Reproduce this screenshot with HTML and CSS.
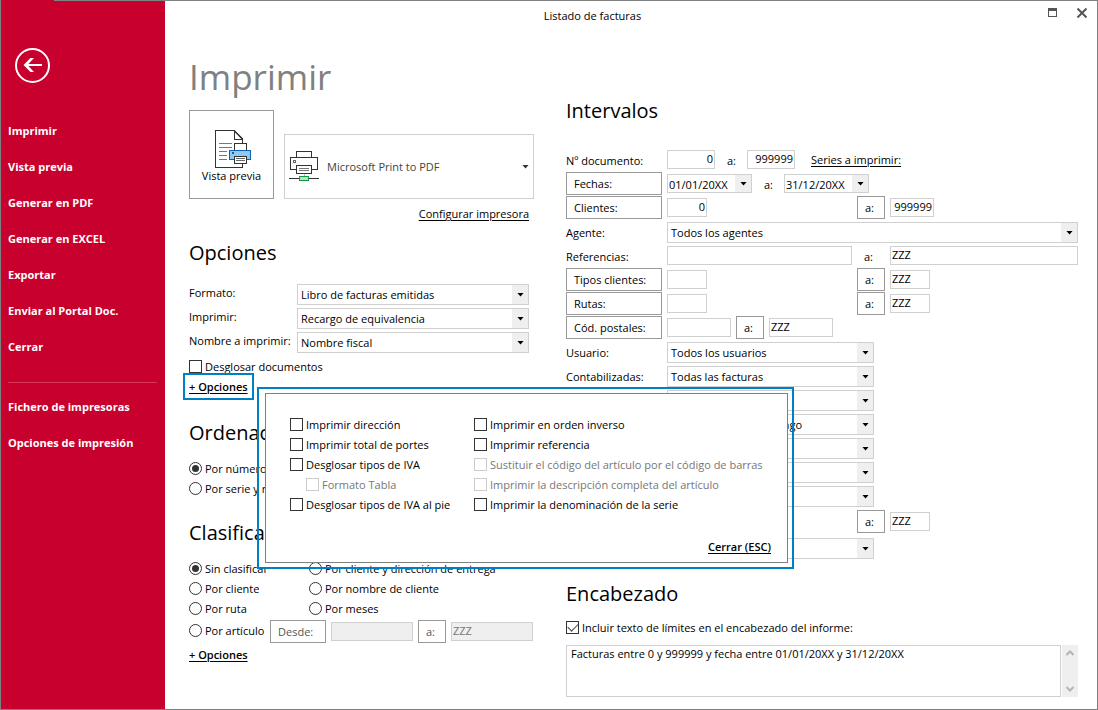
FILE: index.html
```html
<!DOCTYPE html>
<html lang="es">
<head>
<meta charset="utf-8">
<title>Listado de facturas</title>
<link rel="stylesheet" href="styles.css">
</head>
<body>
<div class="window">
  <nav class="sidebar">
    <button class="back" aria-label="Volver">
      <svg width="36" height="36" viewBox="0 0 36 36" fill="none" stroke="#fff"><circle cx="17.500" cy="17.500" r="16.500" stroke-width="2"/><path d="M10 17H27" stroke-width="2"/><path d="M8.500 17L15.500 10H19L12.500 17L19 24H15.500Z" fill="#fff" stroke="none"/></svg>
    </button>
    <a href="#">Imprimir</a>
    <a href="#">Vista previa</a>
    <a href="#">Generar en PDF</a>
    <a href="#">Generar en EXCEL</a>
    <a href="#">Exportar</a>
    <a href="#">Enviar al Portal Doc.</a>
    <a href="#">Cerrar</a>
    <hr>
    <a href="#">Fichero de impresoras</a>
    <a href="#">Opciones de impresión</a>
  </nav>
  <main class="main">
    <header class="titlebar">
      <span class="caption">Listado de facturas</span>
      <button aria-label="Maximizar"><svg width="10" height="10" viewBox="0 0 10 10" shape-rendering="crispEdges"><path d="M1 0H10V9H1ZM2 3V8H9V3Z" fill="#555" fill-rule="evenodd"/></svg></button>
      <button aria-label="Cerrar ventana"><svg width="10" height="10" viewBox="0 0 10 10"><path d="M.5 .5L9.500 9.500M9.500 .5L.5 9.500" stroke="#555" stroke-width="2"/></svg></button>
    </header>
    <div class="columns">
      <div class="left">
        <h1>Imprimir</h1>
        <div class="print-bar">
          <button class="preview">
            <svg width="37" height="39" viewBox="0 0 37 39" fill="none" shape-rendering="crispEdges"><path d="M.5 .5H19.500L27.500 9V37.500H.5Z" fill="#fff" stroke="#333"/><path d="M19.500 .5V9.500H27.500" stroke="#333"/><path d="M19.500 1L27.500 9" stroke="#333" stroke-width="1.500" shape-rendering="auto"/><path d="M4 13.500H17M4 17.500H17M4 21.500H12M4 25.500H12M4 29.500H12" stroke="#777"/><path d="M19.500 20.500V13.500H31.500V20.500" fill="#fff" stroke="#333"/><path d="M14.500 20.500H35.500V29.500H14.500Z" fill="#91c8f0" stroke="#0a62b0"/><path d="M17 22h2v2h-2z" fill="#0a62b0"/><path d="M19.500 26.500H31.500V33.500H19.500Z" fill="#fff" stroke="#333"/><path d="M21 28.500H30M21 30.500H30" stroke="#666"/></svg>
            <span>Vista previa</span>
          </button>
          <button class="printer">
            <svg width="30" height="31" viewBox="0 0 30 31" fill="none" shape-rendering="crispEdges"><path d="M7.500 6.500V.5H22.500V6.500" fill="#fff" stroke="#333"/><path d="M7 18.500H1.500V6.500H28.500V18.500H23" fill="#fff" stroke="#333"/><path d="M4.500 9.500H6.500V11.500H4.500Z" stroke="#666"/><path d="M7.500 14.500H22.500V22.500H7.500Z" fill="#fff" stroke="#333"/><path d="M10 17.500H20M10 19.500H20" stroke="#777"/><path d="M15 23V25" stroke="#bbb"/><path d="M0 27.500H30" stroke="#333"/><path d="M10.500 25.500H19.500V29.500H10.500Z" fill="#b9e3c1" stroke="#109848"/></svg>
            <span>Microsoft Print to PDF</span>
            <i class="arrow"></i>
          </button>
        </div>
        <div class="configure"><a href="#">Configurar impresora</a></div>

        <section class="options">
          <h2>Opciones</h2>
          <div class="option"><label for="formato">Formato:</label><span class="combo"><select id="formato"><option>Libro de facturas emitidas</option></select></span></div>
          <div class="option"><label for="imprimir">Imprimir:</label><span class="combo"><select id="imprimir"><option>Recargo de equivalencia</option></select></span></div>
          <div class="option"><label for="nombre">Nombre a imprimir:</label><span class="combo"><select id="nombre"><option>Nombre fiscal</option></select></span></div>
          <label class="check"><input type="checkbox">Desglosar documentos</label>
          <div class="more">
            <a class="strong highlighted" href="#">+ Opciones</a>
            <div class="popup">
              <div class="popup-body">
                <div class="popup-grid">
                  <div>
                    <label class="check"><input type="checkbox">Imprimir dirección</label>
                    <label class="check"><input type="checkbox">Imprimir total de portes</label>
                    <label class="check"><input type="checkbox">Desglosar tipos de IVA</label>
                    <label class="check nested off"><input type="checkbox" disabled>Formato Tabla</label>
                    <label class="check"><input type="checkbox">Desglosar tipos de IVA al pie</label>
                  </div>
                  <div>
                    <label class="check"><input type="checkbox">Imprimir en orden inverso</label>
                    <label class="check"><input type="checkbox">Imprimir referencia</label>
                    <label class="check off"><input type="checkbox" disabled>Sustituir el código del artículo por el código de barras</label>
                    <label class="check off"><input type="checkbox" disabled>Imprimir la descripción completa del artículo</label>
                    <label class="check"><input type="checkbox">Imprimir la denominación de la serie</label>
                  </div>
                </div>
                <div class="popup-foot"><a class="strong" href="#">Cerrar (ESC)</a></div>
              </div>
            </div>
          </div>
        </section>

        <section class="order">
          <h2>Ordenación</h2>
          <label class="check"><input type="radio" name="orden" checked>Por número</label>
          <label class="check"><input type="radio" name="orden">Por serie y número</label>
        </section>

        <section class="classify">
          <h2>Clasificación</h2>
          <div class="radio-grid">
            <label class="check"><input type="radio" name="clase" checked>Sin clasificar</label>
            <label class="check"><input type="radio" name="clase">Por cliente y dirección de entrega</label>
            <label class="check"><input type="radio" name="clase">Por cliente</label>
            <label class="check"><input type="radio" name="clase">Por nombre de cliente</label>
            <label class="check"><input type="radio" name="clase">Por ruta</label>
            <label class="check"><input type="radio" name="clase">Por meses</label>
          </div>
          <div class="article">
            <label class="check"><input type="radio" name="clase">Por artículo</label>
            <button class="btn" disabled>Desde:</button>
            <input type="text" class="field" aria-label="Desde artículo" disabled>
            <button class="btn to" disabled>a:</button>
            <input type="text" class="field" aria-label="Hasta artículo" value="ZZZ" disabled>
          </div>
          <div class="more"><a class="strong" href="#">+ Opciones</a></div>
        </section>
      </div>

      <div class="right">
        <section>
          <h2>Intervalos</h2>
          <div class="row"><label class="name" for="doc1">Nº documento:</label>
            <input type="text" class="field w48 num" id="doc1" value="0"><label class="until" for="doc2">a:</label><input type="text" class="field w48 num" id="doc2" value="999999"><a class="series" href="#">Series a imprimir:</a></div>
          <div class="row"><button class="btn">Fechas:</button>
            <span class="combo date"><select aria-label="Desde fecha" id="f1"><option>01/01/20XX</option></select></span><label class="until" for="f2">a:</label><span class="combo date"><select id="f2"><option>31/12/20XX</option></select></span></div>
          <div class="row wide"><button class="btn">Clientes:</button><input type="text" class="field w40 num" aria-label="Desde cliente" value="0"><button class="btn to">a:</button><input type="text" class="field w44 num" aria-label="Hasta cliente" value="999999"></div>
          <div class="row"><label class="name" for="agente">Agente:</label><span class="combo fill"><select id="agente"><option>Todos los agentes</option></select></span></div>
          <div class="row wide"><label class="name" for="ref1">Referencias:</label><input type="text" class="field" id="ref1"><label class="until" for="ref2">a:</label><input type="text" class="field" id="ref2" value="ZZZ"></div>
          <div class="row wide"><button class="btn">Tipos clientes:</button><input type="text" class="field w40" aria-label="Desde tipo"><button class="btn to">a:</button><input type="text" class="field w40" aria-label="Hasta tipo" value="ZZZ"></div>
          <div class="row wide"><button class="btn">Rutas:</button><input type="text" class="field w40" aria-label="Desde ruta"><button class="btn to">a:</button><input type="text" class="field w40" aria-label="Hasta ruta" value="ZZZ"></div>
          <div class="row"><button class="btn">Cód. postales:</button><input type="text" class="field w64" aria-label="Desde código postal"><button class="btn to">a:</button><input type="text" class="field w64" aria-label="Hasta código postal" value="ZZZ"></div>
          <div class="row"><label class="name" for="usuario">Usuario:</label><span class="combo mid"><select id="usuario"><option>Todos los usuarios</option></select></span></div>
          <div class="row"><label class="name" for="conta">Contabilizadas:</label><span class="combo mid"><select id="conta"><option>Todas las facturas</option></select></span></div>
          <div class="row"><span class="name"></span><span class="combo mid"><select aria-label="Estado"><option></option></select></span></div>
          <div class="row"><span class="name"></span><span class="combo mid"><select aria-label="Pago"><option>Todas las formas de pago</option></select></span></div>
          <div class="row"><span class="name"></span><span class="combo mid"><select aria-label="Serie"><option></option></select></span></div>
          <div class="row"><span class="name"></span><span class="combo mid"><select aria-label="Tipo"><option></option></select></span></div>
          <div class="row"><span class="name"></span><span class="combo mid"><select aria-label="Origen"><option></option></select></span></div>
          <div class="row wide tall"><span class="name"></span><input type="text" class="field w40" aria-label="Desde almacén"><button class="btn to">a:</button><input type="text" class="field w40" aria-label="Hasta almacén" value="ZZZ"></div>
          <div class="row"><span class="name"></span><span class="combo mid"><select aria-label="Moneda"><option></option></select></span></div>
        </section>
        <section class="heading">
          <h2>Encabezado</h2>
          <label class="check"><input type="checkbox" checked>Incluir texto de límites en el encabezado del informe:</label>
          <div class="memo">
            <textarea aria-label="Texto del encabezado">Facturas entre 0 y 999999 y fecha entre 01/01/20XX y 31/12/20XX</textarea>
            <div class="scroll">
              <button aria-label="Subir"><svg width="8" height="6" viewBox="0 0 8 6" fill="none" stroke="#b5b5b5" stroke-width="2"><path d="M.5 5L4 1.500L7.500 5"/></svg></button>
              <button aria-label="Bajar"><svg width="8" height="6" viewBox="0 0 8 6" fill="none" stroke="#b5b5b5" stroke-width="2"><path d="M.5 1L4 4.500L7.500 1"/></svg></button>
            </div>
          </div>
        </section>
      </div>
    </div>
  </main>
</div>
</body>
</html>
```
FILE: styles.css
```css
* { box-sizing: border-box; }
body {
  margin: 0;
  font: 11px/20px "Open Sans", "Noto Sans", sans-serif;
  color: #000;
  background: #fff;
}
button, input, select, textarea { font: inherit; color: inherit; margin: 0; border-radius: 0; }
button { background: none; border: 0; padding: 0; }
a { color: inherit; text-underline-offset: 2px; }

.window {
  display: flex;
  min-height: 100vh;
  border: solid #808080;
  border-width: 0 1px 1px;
}

/* Sidebar */
.sidebar {
  flex: 0 0 164px;
  padding: 48px 8px 0 7px;
  background: linear-gradient(#808080, #808080) 53px 0 / 100% 1px no-repeat #c8002d;
  color: #fff;
}
.back { display: block; width: 36px; height: 36px; margin: 0 0 29px 7px; }
.back svg { display: block; }
.sidebar a {
  display: block;
  line-height: 36px;
  font-weight: 700;
  font-size: 11px;
  text-decoration: none;
}
.sidebar hr { height: 1px; margin: 17px 0 6px; border: 0; background: #d9385b; }

/* Title bar */
.main { flex: 1; min-width: 0; border-top: 1px solid #808080; }
.titlebar { display: flex; align-items: flex-start; height: 30px; padding: 5px 10px 0 0; }
.caption { flex: 1; padding-right: 7px; text-align: center; }
.titlebar button { width: 10px; height: 14px; margin-left: 20px; }
.titlebar svg { display: block; }

.columns {
  display: grid;
  grid-template-columns: 345px minmax(0, 1fr);
  column-gap: 32px;
  padding: 20px 19px 12px 24px;
}
h1, h2 { margin: 0; font-weight: 400; }
h1 { margin-bottom: 9px; padding-top: 2px; font-size: 35px; line-height: 48px; color: #808080; }
h2 { font-size: 20px; line-height: 32px; }

/* Printer */
.print-bar { display: flex; align-items: flex-end; gap: 10px; }
.preview {
  display: flex;
  flex-direction: column;
  align-items: center;
  width: 85px;
  height: 89px;
  padding-top: 19px;
  border: 1px solid #999;
  line-height: 13px;
}
.preview svg { margin-left: 4px; }
.printer {
  display: flex;
  flex: 1;
  align-items: center;
  gap: 8px;
  height: 65px;
  padding: 0 4px;
  border: 1px solid #d0d0d0;
  color: #444;
}
.printer span { flex: 1; text-align: left; }
.arrow { width: 7px; height: 4px; background: #333; clip-path: polygon(0 0, 100% 0, 50% 100%); }
.configure { margin: 5px 5px 13px; text-align: right; }

/* Controls */
.btn {
  flex: none;
  height: 23px;
  padding: 0 7px;
  border: 1px solid #999;
  line-height: 21px;
  text-align: left;
}
.btn:disabled { color: #555; }
.to { width: 28px; }
.field {
  min-width: 0;
  height: 19px;
  padding: 0 1px 2px;
  border: 1px solid #d0d0d0;
  background: #fff;
  line-height: 15px;
}
.field:disabled { background: #efefef; color: #777; }
.num { text-align: right; }
.w40 { width: 40px; }
.w44 { width: 44px; }
.w48 { width: 48px; }
.w64 { width: 64px; }
.combo { display: grid; grid-template-rows: 100%; height: 21px; border: 1px solid #d0d0d0; }
.combo select {
  grid-area: 1 / 1;
  min-width: 0;
  padding: 0 18px 0 3px;
  border: 0;
  background: linear-gradient(#efefef, #efefef) right / 16px 100% no-repeat #fff;
  appearance: none;
}
.combo::after {
  content: "";
  grid-area: 1 / 1;
  place-self: center end;
  width: 7px;
  height: 4px;
  margin-right: 4px;
  background: #000;
  clip-path: polygon(0 0, 100% 0, 50% 100%);
  pointer-events: none;
}
.check { display: flex; align-items: center; gap: 3px; height: 20px; white-space: nowrap; }
.check input {
  display: grid;
  flex: none;
  place-items: center;
  width: 13px;
  height: 13px;
  margin-bottom: 1px;
  border: 1px solid #333;
  background: #fff;
  appearance: none;
}
.check input[type="radio"] { border-radius: 50%; }
.check input[type="radio"]:checked::before {
  content: "";
  width: 7px;
  height: 7px;
  border-radius: 50%;
  background: #333;
}
.check input[type="checkbox"]:checked::before {
  content: "";
  width: 9px;
  height: 5px;
  margin-bottom: 3px;
  border: solid #444;
  border-width: 0 0 1px 1px;
  transform: rotate(-45deg);
}
.off { color: #777; }
.check.off input { border-color: #ccc; }
.strong { font-weight: 600; }

/* Left column sections */
.options h2 { margin-bottom: 15px; }
.option { display: grid; grid-template-columns: 108px 232px; height: 24px; }
.option label { line-height: 18px; }
.more { position: relative; height: 20px; }
.highlighted { outline: 2px solid #0080c4; outline-offset: 4px; }
.options > .check { margin-top: 1px; }
.order { margin-top: 20px; }
.classify { margin-top: 18px; }
.order h2, .classify h2 { margin-bottom: 10px; }
.radio-grid { display: grid; grid-template-columns: 120px 1fr; }
.article {
  display: grid;
  grid-template-columns: 76px 56px 1fr 28px 1fr;
  align-items: center;
  column-gap: 5px;
  height: 24px;
  margin: 0 1px 2px 0;
}

/* Floating options panel */
.popup {
  position: absolute;
  left: 68px;
  top: 10px;
  z-index: 2;
  width: 537px;
  padding: 4px 4px 4px 6px;
  border: 2px solid #0080c4;
}
.popup-body { padding: 21px 16px 5px 24px; border: 1px solid #808080; background: #fff; }
.popup-grid { display: grid; grid-template-columns: 184px 1fr; }
.nested { margin-left: 16px; }
.popup-foot { margin-top: 22px; text-align: right; }

/* Right column */
.right { padding-top: 44px; }
.right h2 { margin-bottom: 21px; }
.row { display: flex; align-items: flex-start; gap: 5px; height: 24px; }
.row.wide { display: grid; grid-template-columns: 96px 185px 28px minmax(0, 1fr); }
.row > .name, .row > .btn:first-child { flex: 0 0 96px; }
.name { padding-top: 3px; }
.until { width: 22px; padding: 3px 0 0 7px; }
.row > .field, .row > .combo { margin-top: 2px; }
.series { padding-left: 11px; line-height: 23px; }
.row > .date { width: 85px; height: 19px; }
.date select { padding: 0 16px 2px 1px; }
.fill { flex: 1; }
.mid { width: 207px; }
.row.tall { height: 28px; padding-top: 2px; }
.heading { margin-top: 18px; }
.right .heading h2 { margin-bottom: 8px; }
.memo { display: flex; gap: 1px; margin-top: 7px; }
.memo textarea {
  flex: 1;
  height: 52px;
  padding: 0 4px;
  border: 1px solid #d0d0d0;
  line-height: 16px;
  resize: none;
  overflow: hidden;
}
.scroll { display: flex; flex-direction: column; justify-content: space-between; width: 16px; padding: 5px 4px; background: #efefef; }
.scroll button, .scroll svg { display: block; }
```
